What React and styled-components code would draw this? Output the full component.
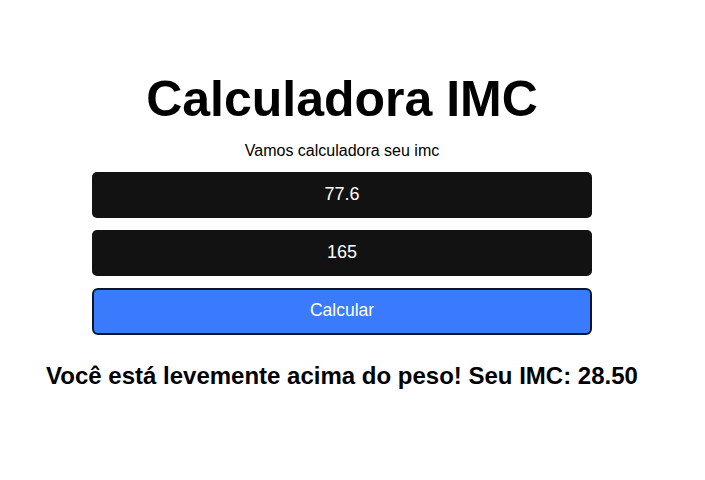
import React from "react";
import styled, { createGlobalStyle } from "styled-components";

const Global = createGlobalStyle`
  html, body { margin: 0; padding: 0; background: #ffffff; }
  body { font-family: "Liberation Sans", Arial, sans-serif; color: #000; }
`;

const Page = styled.main`
  width: 684px;
  display: flex;
  flex-direction: column;
  align-items: center;
  padding-top: 71px;
`;

const Title = styled.h1`
  margin: 0;
  font-size: 50px;
  font-weight: 700;
  line-height: 56px;
`;

const Subtitle = styled.p`
  margin: 14px 0 0;
  font-size: 16px;
  line-height: 19px;
`;

const Form = styled.form`
  width: 500px;
  margin-top: 12px;
  display: flex;
  flex-direction: column;
  gap: 12px;
`;

const Field = styled.div`
  height: 46px;
  padding-bottom: 1px;
  box-sizing: border-box;
  background: #121212;
  border-radius: 5px;
  color: #fff;
  font-size: 18px;
  display: flex;
  align-items: center;
  justify-content: center;
`;

const Button = styled.button`
  height: 47px;
  background: #3a7bfd;
  border: 2px solid #0a1530;
  border-radius: 6px;
  color: #fff;
  font-family: "Liberation Sans", Arial, sans-serif;
  font-size: 17.5px;
  display: flex;
  align-items: center;
  justify-content: center;
  padding: 0 0 2px;
`;

const Result = styled.h2`
  margin: 27px 0 0;
  font-size: 24px;
  font-weight: 700;
  line-height: 28px;
`;

export default function App() {
  return (
    <>
      <Global />
      <Page>
        <Title>Calculadora IMC</Title>
        <Subtitle>Vamos calculadora seu imc</Subtitle>
        <Form onSubmit={(e) => e.preventDefault()}>
          <Field>77.6</Field>
          <Field>165</Field>
          <Button type="submit">Calcular</Button>
        </Form>
        <Result>Você está levemente acima do peso! Seu IMC: 28.50</Result>
      </Page>
    </>
  );
}
